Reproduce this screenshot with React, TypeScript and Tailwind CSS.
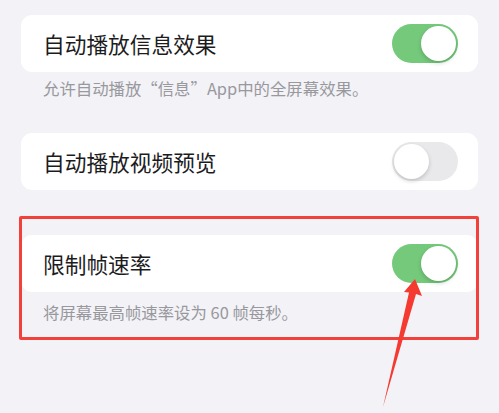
import React from 'react';

const font = { fontFamily: '"Noto Sans CJK SC", "Noto Sans", sans-serif' };

function Toggle({ on }: { on: boolean }) {
  return (
    <div
      className={`relative h-[39px] w-[66px] rounded-full ${
        on ? 'bg-[#74c97b]' : 'bg-[#e9e9eb]'
      }`}
    >
      <div
        className={`absolute top-[2px] h-[35px] w-[35px] rounded-full bg-white shadow-[0_2px_4px_rgba(0,0,0,0.18)] ${
          on ? 'right-[2px]' : 'left-[2px]'
        }`}
      />
    </div>
  );
}

function Row({ title, on }: { title: string; on: boolean }) {
  return (
    <div className="mx-[21px] flex h-[57px] items-center justify-between rounded-[11px] bg-white pl-[22px] pr-[20px]">
      <span className="text-[21.7px] leading-none text-[#1c1c1e]">{title}</span>
      <Toggle on={on} />
    </div>
  );
}

function Caption({ children }: { children: React.ReactNode }) {
  return (
    <p className="pl-[43px] text-[16.4px] leading-[20px] text-[#98989d]">{children}</p>
  );
}

export default function App() {
  return (
    <div
      className="relative h-[413px] w-[499px] overflow-hidden bg-[#f2f2f7] pt-[15px]"
      style={font}
    >
      <Row title="自动播放信息效果" on />
      <div className="mt-[6px]">
        <Caption>允许自动播放“信息”App中的全屏幕效果。</Caption>
      </div>

      <div className="mt-[35px]">
        <Row title="自动播放视频预览" on={false} />
      </div>

      <div className="mt-[45px]">
        <Row title="限制帧速率" on />
      </div>
      <div className="mt-[10px]">
        <Caption>将屏幕最高帧速率设为 60 帧每秒。</Caption>
      </div>

      {/* annotation box */}
      <div className="pointer-events-none absolute left-[19px] top-[216px] h-[124px] w-[460px] rounded-[2px] border-[3px] border-[#f2403a]" />

      {/* annotation arrow */}
      <svg
        className="pointer-events-none absolute left-0 top-0"
        width="499"
        height="413"
        viewBox="0 0 499 413"
      >
        <polygon
          points="415,279 422,296 416,294 383,407 409,292.5 404,292"
          fill="#f53a31"
        />
      </svg>
    </div>
  );
}
